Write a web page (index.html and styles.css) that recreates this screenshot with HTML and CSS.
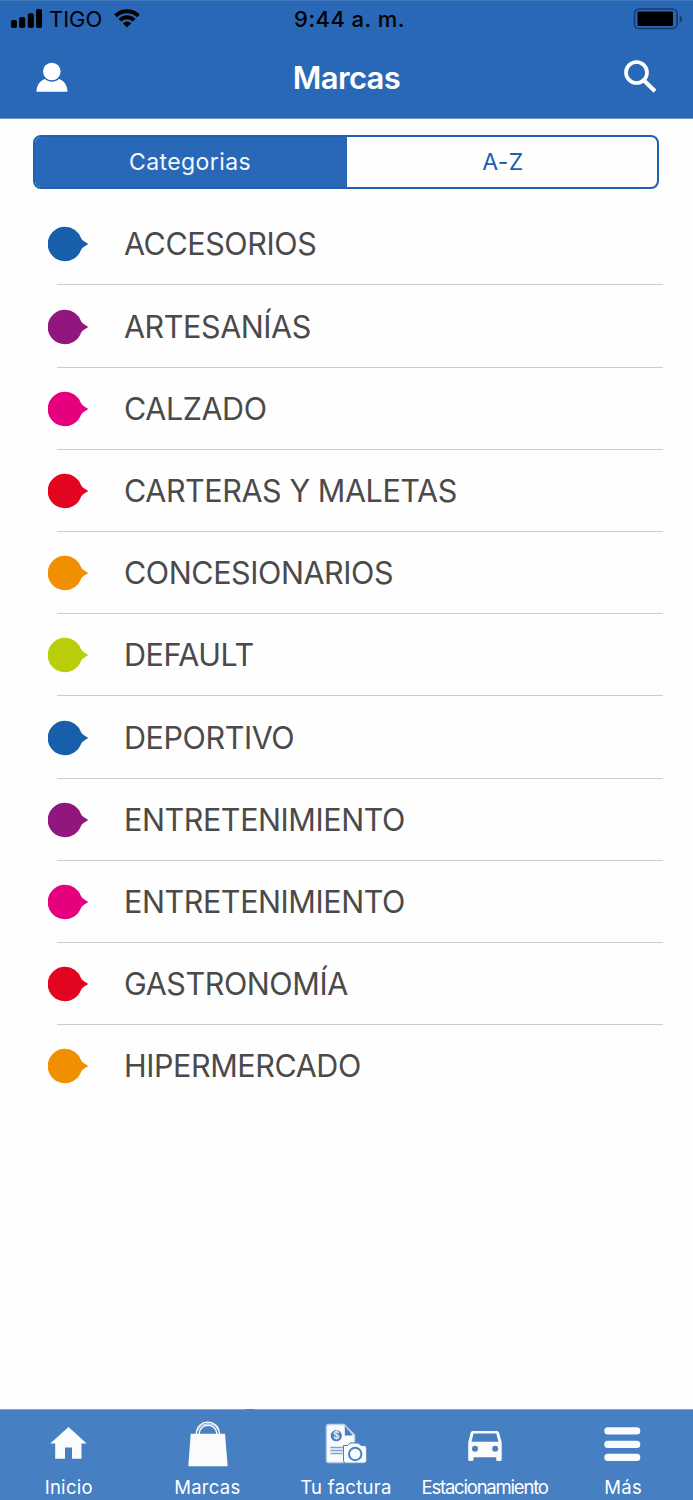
FILE: index.html
```html
<!DOCTYPE html>
<html lang="es">
<head>
<meta charset="utf-8">
<title>Marcas</title>
<link rel="stylesheet" href="styles.css">
</head>
<body>
<div class="app">
  <header class="header">
    <div class="status">
      <div class="status-left">
        <svg class="signal" width="31" height="19" viewBox="0 0 31 19"><rect x="0" y="11" width="6" height="8" rx="1.8"/><rect x="8.2" y="8" width="6" height="11" rx="1.8"/><rect x="16.8" y="4.2" width="6" height="14.8" rx="1.8"/><rect x="25" y="0" width="6" height="19" rx="1.8"/></svg>
        <span class="carrier">TIGO</span>
        <svg class="wifi" width="26" height="19" viewBox="0 0 26 19"><path d="M0.2 5.5A18.2 18.2 0 0 1 25.800 5.500L23 8.300A14.200 14.200 0 0 0 3 8.300ZM4.500 9.900A12 12 0 0 1 21.500 9.900L18.700 12.600A8.200 8.200 0 0 0 7.300 12.600ZM8.800 14.200A6 6 0 0 1 17.200 14.200L13 18.500Z"/></svg>
      </div>
      <span class="time">9:44 a. m.</span>
      <svg class="battery" width="50" height="22" viewBox="0 0 50 22"><rect x="1.500" y="1" width="42.500" height="19.500" rx="4.500" fill="none" stroke="#173c6c" stroke-width="1.700"/><rect x="4.500" y="3.500" width="35.500" height="14.500" rx="1"/><path fill="#173c6c" d="M46.700 7.500C50 9 50 13 46.700 14.500Z"/></svg>
    </div>
    <div class="titlebar">
      <svg class="user" width="32" height="30" viewBox="0 0 32 30"><path d="M0.500 28.800C0.500 22.500 4 17.500 9 16C13 19.500 19 19.500 23 16C28 17.500 31.500 22.500 31.500 28.800Z"/><circle cx="15.800" cy="8.500" r="8.800"/></svg>
      <h1 class="title">Marcas</h1>
      <svg class="search" width="33" height="33" viewBox="0 0 33 33"><circle cx="12.500" cy="12.500" r="10.500" fill="none" stroke="#fff" stroke-width="3.700"/><path d="M20 20.500L31 31.200" stroke="#fff" stroke-width="4.200"/></svg>
    </div>
  </header>
  <main class="content">
    <div class="segments">
      <button class="segment active">Categorias</button>
      <button class="segment">A-Z</button>
    </div>
    <svg class="defs" width="0" height="0"><symbol id="pin" viewBox="0 0 42 36"><path d="M17 0.800A17.200 17.200 0 1 0 33.200 23.500C34.500 21.500 37 20 40.300 18C37 16 34.500 14.500 33.200 12.500A17.200 17.200 0 0 0 17 0.800Z"/></symbol></svg>
    <ul class="list">
      <li class="row blue"><svg class="pin"><use href="#pin"/></svg><span class="name">ACCESORIOS</span></li>
      <li class="row purple"><svg class="pin"><use href="#pin"/></svg><span class="name">ARTESANÍAS</span></li>
      <li class="row pink"><svg class="pin"><use href="#pin"/></svg><span class="name">CALZADO</span></li>
      <li class="row red"><svg class="pin"><use href="#pin"/></svg><span class="name">CARTERAS Y MALETAS</span></li>
      <li class="row orange"><svg class="pin"><use href="#pin"/></svg><span class="name">CONCESIONARIOS</span></li>
      <li class="row lime"><svg class="pin"><use href="#pin"/></svg><span class="name">DEFAULT</span></li>
      <li class="row blue"><svg class="pin"><use href="#pin"/></svg><span class="name">DEPORTIVO</span></li>
      <li class="row purple"><svg class="pin"><use href="#pin"/></svg><span class="name">ENTRETENIMIENTO</span></li>
      <li class="row pink"><svg class="pin"><use href="#pin"/></svg><span class="name">ENTRETENIMIENTO</span></li>
      <li class="row red"><svg class="pin"><use href="#pin"/></svg><span class="name">GASTRONOMÍA</span></li>
      <li class="row orange"><svg class="pin"><use href="#pin"/></svg><span class="name">HIPERMERCADO</span></li>
    </ul>
  </main>
  <nav class="tabs">
    <svg class="peek" width="14" height="2" viewBox="0 0 14 2"><path d="M1 2Q7-.2 13 2Z" fill="#5277a5"/></svg>
    <a class="tab"><svg class="icon" width="44" height="48" viewBox="0 0 44 48"><path d="M21.500 7L39.700 23.500H34.500V38.800H25V27.500H18V38.800H8.200V23.500H3.200Z"/></svg><span class="label">Inicio</span></a>
    <a class="tab"><svg class="icon" width="44" height="48" viewBox="0 0 44 48"><path d="M5.700 13.700H40L42.700 46.200H3.300Z"/><path d="M11.200 15C11.200-2.300 34.500-2.300 34.500 15M14 15C14 2 32 2 32 15" fill="none" stroke="#fff" stroke-width="1.300"/><path d="M12.500 11C16 1.500 30.500 1.500 33.500 11" fill="none" stroke="#fff" stroke-width="1"/></svg><span class="label">Marcas</span></a>
    <a class="tab"><svg class="icon" width="44" height="48" viewBox="0 0 44 48"><path d="M4.800 4.500H20L30.500 15V42.500H4.800Q2.500 42.500 2.500 40V7Q2.500 4.500 4.800 4.500Z" stroke="#bcd1ec" stroke-width="1.500"/><path d="M20.800 6V15.500H29Z" fill="#477fc3"/><circle cx="12.300" cy="15.700" r="5.600" fill="#477fc3"/><text class="dollar" x="12.300" y="19.300">$</text><path d="M6.300 27.500H20M6.300 30.500H20M6.300 33.500H18.500" stroke="#7ea5d8" stroke-width="1.500"/><path d="M20 25.500H23.500L26 23H34.500L37 25.500H40Q42.700 25.500 42.700 28V40.500Q42.700 43.200 40 43.200H22Q19.500 43.200 19.500 40.500V25.500Z" stroke="#477fc3" stroke-width="1"/><circle cx="31.200" cy="34" r="6.200" fill="none" stroke="#477fc3" stroke-width="2"/></svg><span class="label">Tu factura</span></a>
    <a class="tab"><svg class="icon" width="44" height="48" viewBox="0 0 44 48"><path fill-rule="evenodd" d="M9.500 11H34Q35.500 11 36 12.500L38.700 22.500V39.500Q38.700 41 37.200 41H34.700Q33.200 41 33.200 39.500V37.200H10.500V39.500Q10.500 41 9 41H6.700Q5.200 41 5.200 39.500V22.500L7.700 12.500Q8.200 11 9.500 11ZM10.500 13.500L8.500 21.800H35.500L33.300 13.500ZM12 25.700A3 3 0 1 0 12 31.700A3 3 0 1 0 12 25.700ZM32.200 25.700A3 3 0 1 0 32.200 31.700A3 3 0 1 0 32.200 25.700Z"/></svg><span class="label tight">Estacionamiento</span></a>
    <a class="tab"><svg class="icon" width="44" height="48" viewBox="0 0 44 48"><rect x="3.300" y="7.300" width="36" height="7.300" rx="3.500"/><rect x="3.300" y="20.800" width="36" height="7.300" rx="3.500"/><rect x="3.300" y="33.800" width="36" height="7.300" rx="3.500"/></svg><span class="label">Más</span></a>
  </nav>
</div>
</body>
</html>
```

FILE: styles.css
```css
* { box-sizing: border-box; }
body { margin: 0; font-family: Inter, Roboto, sans-serif; background: #fefefe; }
.app { width: 693px; height: 1500px; display: flex; flex-direction: column; overflow: hidden; }
.header { height: 119px; background: #2968b7; border-top: 1px solid #3f78bb; border-bottom: 1px solid #7296c2; }
.status { height: 36px; display: grid; grid-template-columns: 1fr auto 1fr; align-items: center; padding: 0 10px 0 11px; }
.status-left { display: flex; align-items: center; }
.signal { margin-top: -1px; }
.carrier { margin-left: 7px; font-size: 22px; line-height: 26px; }
.wifi { margin: -2px 0 0 12px; }
.time { padding-left: 5px; font-size: 22px; font-weight: 500; letter-spacing: .45px; line-height: 26px; }
.battery { justify-self: end; }
.titlebar { height: 81px; display: grid; grid-template-columns: 1fr auto 1fr; align-items: center; padding: 0 36px; color: #fff; }
.user { fill: #fff; overflow: visible; }
.title { margin: 0; font-size: 31px; font-weight: 600; letter-spacing: -.65px; line-height: 40px; }
.search { justify-self: end; margin-top: -2px; }
.content { flex: 1; }
.segments { margin: 16px 34px 0 33px; height: 54px; display: flex; border: 2px solid #2060b2; border-radius: 8px; overflow: hidden; background: #fefefe; }
.segment { flex: 1; border: 0; padding: 0 0 0 2px; background: transparent; color: #1d5eb1; font: 400 23px/50px Inter, Roboto, sans-serif; letter-spacing: .4px; }
.segment.active { flex: 0 0 312px; padding: 0 2px 0 0; background: #2968b7; color: #f3f8ff; }
.defs { position: absolute; }
.list { list-style: none; margin: 14.300px 30px 0 47.500px; padding: 0; }
.row { height: 82.200px; display: flex; align-items: center; background: linear-gradient(#cbccce, #cbccce) 9.500px 100% / 100% 1px no-repeat; }
.row:last-child { background: none; }
.pin { width: 42px; height: 36px; fill: currentColor; }
.blue { color: #175fab; }
.purple { color: #91177f; }
.pink { color: #e6007e; }
.red { color: #e3051f; }
.orange { color: #f08f00; }
.lime { color: #b9ce09; }
.name { margin-left: 34.500px; font-size: 30.500px; font-weight: 400; letter-spacing: -.42px; color: #4a4a4a; line-height: 40px; white-space: nowrap; }
.tabs { position: relative; height: 91px; display: grid; grid-template-columns: repeat(5, 1fr); background: #477fc3; border-top: 1px solid #86a7d0; }
.peek { position: absolute; left: 243px; top: -2px; }
.tab { display: flex; flex-direction: column; align-items: center; padding: 10px 1px 0 0; color: #fff; }
.icon { fill: #fafbfc; }
.label { margin-top: 8px; font-size: 18.500px; line-height: 22px; letter-spacing: .3px; white-space: nowrap; }
.label.tight { letter-spacing: -1.200px; }
.dollar { font-size: 10px; font-weight: 700; text-anchor: middle; fill: #e3ecf8; }
```
